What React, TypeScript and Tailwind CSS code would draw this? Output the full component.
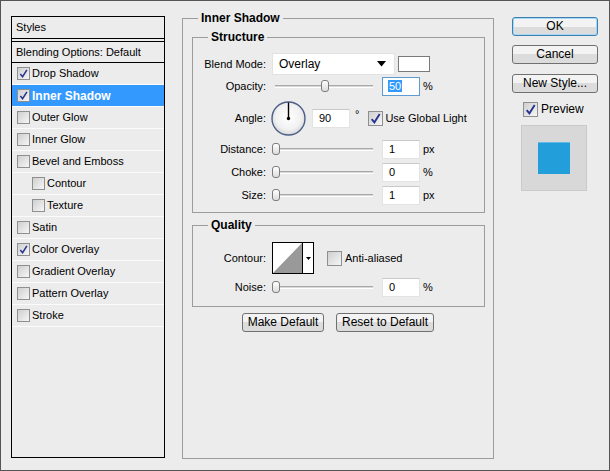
import React from "react"

const Check = ({ checked = false, big = false }: { checked?: boolean; big?: boolean }) => (
  <span
    className={`inline-flex shrink-0 items-center justify-center border border-[#8e8f8f] bg-linear-to-br from-[#cfcfcf] to-[#f6f6f6] ${
      big ? "w-[15px] h-[15px]" : "w-[13px] h-[13px]"
    }`}
  >
    {checked && (
      <svg width={big ? 11 : 9} height={big ? 11 : 9} viewBox="0 0 10 10">
        <path d="M1.5 5.5 L4 8.5 L8.8 1" stroke="#26348f" strokeWidth="1.7" fill="none" />
      </svg>
    )}
  </span>
)

const styleItems = [
  { name: "Drop Shadow", checked: true },
  { name: "Inner Shadow", checked: true, selected: true },
  { name: "Outer Glow" },
  { name: "Inner Glow" },
  { name: "Bevel and Emboss" },
  { name: "Contour", nested: true },
  { name: "Texture", nested: true },
  { name: "Satin" },
  { name: "Color Overlay", checked: true },
  { name: "Gradient Overlay" },
  { name: "Pattern Overlay" },
  { name: "Stroke" },
]

const Slider = ({ pos = 0 }: { pos?: number }) => (
  <div className="relative w-[102px] h-[13px] flex items-center">
    <div className="ml-[3px] w-[98px] h-[3px] border-t border-[#a9a9a9] border-b border-b-white bg-[#d8d8d8]" />
    <div
      className="absolute top-0 w-[8px] h-[12px] rounded-[3px] border border-[#7d7d7d] bg-linear-to-b from-white to-[#dcdcdc]"
      style={{ left: pos }}
    />
  </div>
)

const Field = ({ value, focused = false }: { value: string; focused?: boolean }) => (
  <div
    className={`w-[38px] h-[19px] bg-white border pl-[5px] leading-[17px] ${
      focused ? "border-[#5d9bd3]" : "border-[#e3e3e3] border-t-[#c9c9c9]"
    }`}
  >
    {focused ? <span className="bg-[#3399ff] text-white px-px">{value}</span> : <span className="pl-px">{value}</span>}
  </div>
)

const Label = ({ children }: { children: React.ReactNode }) => (
  <div className="w-[79px] pr-[6px] text-right shrink-0">{children}</div>
)

const Row = ({ label, children, className = "" }: { label: string; children: React.ReactNode; className?: string }) => (
  <div className={`flex items-center ${className}`}>
    <Label>{label}</Label>
    {children}
  </div>
)

const Group = ({ title, className = "", children }: { title: string; className?: string; children: React.ReactNode }) => (
  <div className={`border border-[#9c9c9c] ${className}`}>
    <div className="-mt-[8px] ml-[15px] px-[3px] w-fit bg-[#ececec] font-bold text-[12px] leading-[14px]">{title}</div>
    {children}
  </div>
)

const Button = ({ children, className = "", primary = false }: { children: React.ReactNode; className?: string; primary?: boolean }) => (
  <button
    className={`h-[19px] rounded-[3px] border text-[12px] leading-[15px] bg-linear-to-b from-[#f3f3f3] from-50% to-[#dcdcdc] to-50% ${
      primary ? "border-[#3c7fb1] shadow-[inset_0_0_0_1px_#a7d9f5]" : "border-[#707070]"
    } ${className}`}
  >
    {children}
  </button>
)

export default function App() {
  return (
    <div className="w-[610px] h-[471px] bg-[#ececec] border border-[#555] flex items-start pl-[10px] text-[11px] text-black font-['Liberation_Sans',Arial,sans-serif]">
      {/* styles list */}
      <div className="mt-[15px] w-[154px] h-[442px] border border-black">
        <div className="h-[22px] pl-[4px] leading-[21px] border-b border-black">Styles</div>
        <div className="h-[2px]" />
        <div className="h-[22px] pl-[4px] leading-[21px] border-t border-b border-black">Blending Options: Default</div>
        {styleItems.map((item) => (
          <div
            key={item.name}
            className={`h-[22px] flex items-center gap-[2px] border-b border-[#fbfbfb] ${item.nested ? "pl-[20px]" : "pl-[5px]"} ${
              item.selected ? "bg-[#3399ff] text-white font-bold text-[12px]" : ""
            }`}
          >
            <Check checked={item.checked} />
            <span>{item.name}</span>
          </div>
        ))}
      </div>

      {/* settings */}
      <div className="mt-[17px] ml-[17px] w-[312px] h-[441px] border border-[#9c9c9c]">
        <div className="-mt-[8px] ml-[15px] px-[3px] w-fit bg-[#ececec] font-bold text-[12px] leading-[14px]">Inner Shadow</div>

        <Group title="Structure" className="mt-[12px] ml-[9px] w-[293px] pb-[7px]">
          <Row label="Blend Mode:" className="mt-[9px] h-[22px]">
            <div className="w-[123px] h-[22px] bg-white border border-[#e2e2e2] flex items-center justify-between pl-[6px] pr-[8px] text-[12px]">
              <span>Overlay</span>
              <svg width="9" height="6" viewBox="0 0 9 6">
                <path d="M0 0 H9 L4.5 5.5 Z" fill="#000" />
              </svg>
            </div>
            <div className="ml-[3px] w-[32px] h-[16px] bg-white border border-[#7a7a7a]" />
          </Row>
          <Row label="Opacity:" className="mt-[2px] h-[19px]">
            <Slider pos={49} />
            <div className="ml-[8px]">
              <Field value="50" focused />
            </div>
            <span className="ml-[3px]">%</span>
          </Row>
          <Row label="Angle:" className="mt-[5px] h-[35px]">
            <svg width="35" height="35" viewBox="0 0 35 35" className="-ml-px">
              <defs>
                <radialGradient id="dial" cx="50%" cy="45%" r="55%">
                  <stop offset="0%" stopColor="#ffffff" />
                  <stop offset="70%" stopColor="#f1f1f1" />
                  <stop offset="100%" stopColor="#d6d6d6" />
                </radialGradient>
              </defs>
              <circle cx="17.5" cy="17.5" r="16.5" fill="url(#dial)" stroke="#4c6089" strokeWidth="1.4" />
              <line x1="17.5" y1="17.5" x2="17.5" y2="1.5" stroke="#000" strokeWidth="1.4" />
              <circle cx="17.5" cy="17.5" r="1.7" fill="#000" />
            </svg>
            <div className="ml-[6px]">
              <Field value="90" />
            </div>
            <span className="ml-[5px] -mt-[8px]">°</span>
            <div className="ml-[9px] flex items-center gap-[2px]">
              <Check checked big />
              <span>Use Global Light</span>
            </div>
          </Row>
          <Row label="Distance:" className="mt-[4px] h-[19px]">
            <Slider />
            <div className="ml-[8px]">
              <Field value="1" />
            </div>
            <span className="ml-[3px]">px</span>
          </Row>
          <Row label="Choke:" className="mt-[4px] h-[19px]">
            <Slider />
            <div className="ml-[8px]">
              <Field value="0" />
            </div>
            <span className="ml-[3px]">%</span>
          </Row>
          <Row label="Size:" className="mt-[4px] h-[19px]">
            <Slider />
            <div className="ml-[8px]">
              <Field value="1" />
            </div>
            <span className="ml-[3px]">px</span>
          </Row>
        </Group>

        <Group title="Quality" className="mt-[12px] ml-[9px] w-[293px] pb-[9px]">
          <Row label="Contour:" className="mt-[10px] h-[32px]">
            <div className="w-[42px] h-[32px] border border-black bg-white flex">
              <svg width="29" height="30" viewBox="0 0 29 30" className="shrink-0">
                <path d="M0 30 L29 0 V30 Z" fill="#999" />
              </svg>
              <div className="flex-1 border-l border-black flex items-center justify-center">
                <svg width="5" height="3" viewBox="0 0 5 3">
                  <path d="M0 0 H5 L2.5 3 Z" fill="#000" />
                </svg>
              </div>
            </div>
            <div className="ml-[13px] flex items-center gap-[3px]">
              <Check big />
              <span>Anti-aliased</span>
            </div>
          </Row>
          <Row label="Noise:" className="mt-[4px] h-[19px]">
            <Slider />
            <div className="ml-[8px]">
              <Field value="0" />
            </div>
            <span className="ml-[3px]">%</span>
          </Row>
        </Group>

        <div className="mt-[6px] flex justify-center gap-[12px]">
          <Button className="w-[82px]">Make Default</Button>
          <Button className="w-[98px]">Reset to Default</Button>
        </div>
      </div>

      {/* actions */}
      <div className="mt-[16px] ml-[18px] w-[86px] flex flex-col">
        <Button primary className="w-[86px] h-[18px]">OK</Button>
        <Button className="mt-[9px] w-[86px] h-[18px]">Cancel</Button>
        <Button className="mt-[10px] w-[86px] h-[18px]">New Style...</Button>
        <div className="mt-[7px] ml-[11px] flex items-center gap-[3px] text-[12px]">
          <Check checked big />
          <span>Preview</span>
        </div>
        <div className="mt-[7px] ml-[9px] w-[66px] h-[66px] bg-[#d8d8d8] border border-[#cacaca] flex items-center justify-center">
          <div className="w-[32px] h-[32px] bg-[#229fda] border-t border-[#5fbbe6]" />
        </div>
      </div>
    </div>
  )
}
